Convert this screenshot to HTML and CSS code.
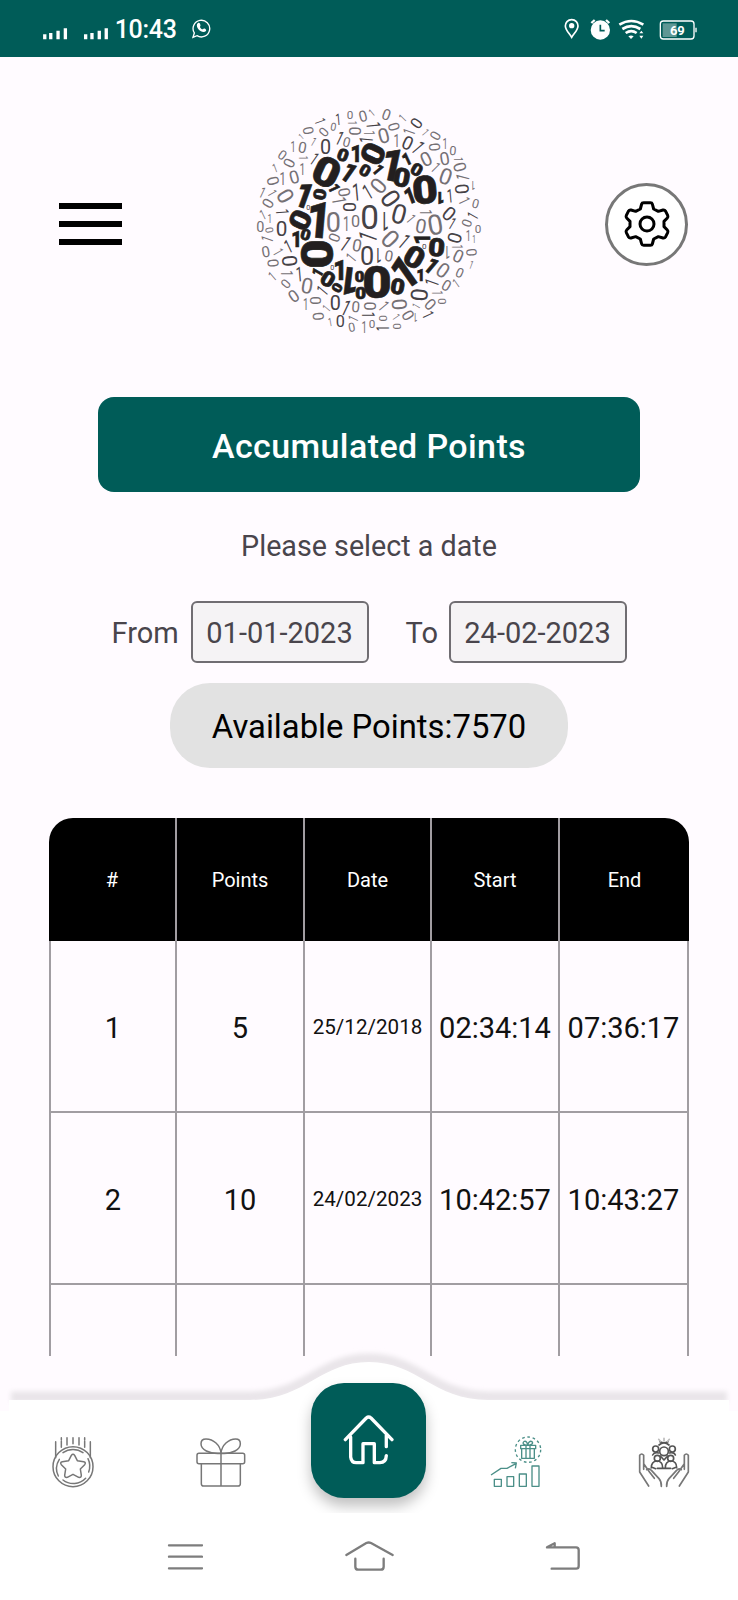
FILE: index.html
```html
<!DOCTYPE html>
<html lang="en">
<head>
<meta charset="utf-8">
<title>Accumulated Points</title>
<link rel="stylesheet" href="styles.css">
</head>
<body>
<div class="screen">
  <div class="statusbar">
    <svg class="signal" viewBox="126 80 200 40"><path d="M134 102v15M152 98v19M174 91v26M196 84v33M257 102v15M276 98v19M298 91v26M319 84v33"/></svg>
    <span class="clock">10:43</span>
    <svg class="chat" viewBox="574 54 60 64"><path d="M580 112l4-13a25 25 0 1 1 8 8z" fill="none" stroke="#fff" stroke-width="4"/><path d="M592 73c5-7 8-5 10 1 2 5-3 5 0 9 4 5 6 6 9 4 4-4 11 3 8 6-9 9-31-5-27-20z" fill="#fff"/></svg>
    <svg class="sysicons" viewBox="580 50 410 72">
      <path d="M609 58c-12 0-19 9-19 19 0 12 12 22 19 34 7-12 19-22 19-34 0-10-7-19-19-19z" fill="none" stroke="#fff" stroke-width="5"/><circle cx="609" cy="76" r="8" fill="#fff"/>
      <circle cx="695" cy="89" r="29" fill="#fff"/><path d="M668 68l10-9M722 68l-10-9" stroke="#fff" stroke-width="7"/><path d="M695 73v18h13" stroke="#005c58" stroke-width="5" fill="none"/>
      <path d="M752 73q36-22 72 0M761 86q27-17 54 0M771 98q17-11 33 0" fill="none" stroke="#fff" stroke-width="8"/><path d="M779 108q8-5 16 0l-8 8zM812 99l6-8 6 8zM812 106l6 9 6-9z" fill="#fff"/>
      <rect x="882" y="69" width="42" height="41" fill="#5f9794"/><rect x="875" y="62" width="101" height="54" rx="9" fill="none" stroke="#fff" stroke-width="4"/><path d="M982 82v14" stroke="#fff" stroke-width="4"/><text x="926" y="105" text-anchor="middle" class="battery">69</text>
    </svg>
  </div>

  <header class="header">
    <div class="burger"><i></i><i></i><i></i></div>
    <svg class="logo" id="logo" viewBox="0 0 750 735"></svg>
    <div class="gear">
      <svg viewBox="96 88 150 150"><path d="M161 99h20q5 0 6 4l4 15 14 7 14-4q5-1 8 4l6 12q2 5-1 8l-10 10v16l10 10q3 3 1 8l-6 12q-3 5-8 4l-14-4-14 7-4 15q-1 4-6 4h-20q-5 0-6-4l-4-15-14-7-14 4q-5 1-8-4l-6-12q-2-5 1-8l10-10v-16l-10-10q-3-3-1-8l6-12q3-5 8-4l14 4 14-7 4-15q1-4 6-4z"/><circle cx="171" cy="163" r="21"/></svg>
    </div>
  </header>

  <main class="content">
    <h1 class="title">Accumulated Points</h1>
    <p class="hint">Please select a date</p>
    <div class="range">
      <span class="from">From</span><span class="date">01-01-2023</span>
      <span class="to">To</span><span class="date">24-02-2023</span>
    </div>
    <div class="available">Available Points:7570</div>
    <div class="table">
      <div class="row head"><span>#</span><span>Points</span><span>Date</span><span>Start</span><span>End</span></div>
      <div class="row"><span>1</span><span>5</span><span class="small">25/12/2018</span><span>02:34:14</span><span>07:36:17</span></div>
      <div class="row"><span>2</span><span>10</span><span class="small">24/02/2023</span><span>10:42:57</span><span>10:43:27</span></div>
      <div class="row"><span></span><span></span><span></span><span></span><span></span></div>
    </div>
  </main>

  <nav class="tabs">
    <svg class="wave" viewBox="0 0 738 180">
      <defs><filter id="soft" x="-5%" y="-50%" width="110%" height="200%"><feGaussianBlur stdDeviation="2.4"/></filter></defs>
      <path d="M11 57H250C305 57 320 19 369 19S433 57 488 57H727" fill="none" stroke="#e9e5e9" stroke-width="11" filter="url(#soft)"/>
      <path d="M0 180V71H9V60H250C305 60 320 22 369 22S433 60 488 60H729V71H738V180z" fill="#fff"/>
    </svg>
    <svg class="icon" viewBox="142 287 156 156">
      <circle cx="220" cy="379" r="60"/><path d="M176 407a51 51 0 0 1 3-50M190 337a51 51 0 0 1 60 0M265 355a51 51 0 0 1 2 40M258 414a51 51 0 0 1-68 5"/>
      <path d="M215 345q5-7 10 0l8 16 19 3q8 2 3 9l-13 13 3 19q0 8-8 6l-17-9-17 9q-8 2-8-6l3-19-13-13q-5-7 3-9l19-3z"/>
      <path d="M168 304v48M272 304v48M185 292v7M185 303v18M202 292v22M220 292v18M238 292v22M255 292v7M255 303v18"/>
    </svg>
    <svg class="icon" viewBox="586 287 156 156"><rect x="592" y="339" width="143" height="31" rx="6"/><path d="M605 370v60q0 7 7 7h103q7 0 7-7v-60M664 339v98M664 339c-37 3-60-12-60-29 0-9 5-14 15-14 22 0 43 18 45 43 2-25 23-43 44-43 10 0 14 5 14 14 0 17-23 32-58 29z"/></svg>
    <div class="home"><svg viewBox="1030 218 154 160"><path d="M1037 298l63-65q7-6 14 0l63 65M1053 290v60q2 17 17 17h20v-57h34v57h17q18 0 19-21M1160 285v34"/></svg></div>
    <svg class="icon chart" viewBox="363 287 156 156">
      <path d="M376 417h21v21h-21zM414 409h20v29h-20zM451 401h21v37h-21zM489 377h21v61h-21zM366 404l30-20h18l27-14M427 367l15 1-3 16"/><circle cx="477" cy="328" r="38" stroke-dasharray="8 8"/><path d="M455 315h45v10h-45zM458 325h38v29h-38zM471 315v39M483 315v39M476 315c-12-1-18-6-10-12 6-2 9 5 10 12 1-8 7-15 13-11 5 5-1 10-13 11"/>
    </svg>
    <svg class="icon hands" viewBox="806 287 156 156">
      <path d="M811 395v-50q6-8 12 0v42M811 395l27 42M823 370l18 26 14 18M832 388q8-6 15 3l22 24q8 9 7 23M957 395v-50q-6-8-12 0v42M957 395l-27 42M945 370l-18 26-14 18M936 388q-8-6-15 3l-22 24q-8 9-7 23"/>
      <g class="people"><circle cx="884" cy="333" r="13"/><circle cx="859" cy="326" r="9"/><circle cx="909" cy="326" r="9"/><circle cx="864" cy="354" r="9"/><circle cx="904" cy="354" r="9"/><path d="M850 344q5-10 18-6M900 338q14-4 18 6M846 382q0-18 16-20 18 0 18 20M888 382q0-18 16-20 18 0 18 20M846 380l13 5M922 380l-13 5M864 384h40M869 314q15-13 30 0M872 304q12 7 24 0M873 347l11 12 11-12"/><path class="faint" d="M884 294v8M868 297l5 6M900 297l-5 6"/></g>
    </svg>
  </nav>

  <footer class="sysnav">
    <svg viewBox="500 600 110 95"><path d="M506 616h99M506 650h99M506 685h99"/></svg>
    <svg class="syshome" viewBox="1030 600 156 95"><path d="M1040 645l60-36q7-3 14 0l65 36M1067 656v24q0 9 9 9h67q9 0 9-9v-24"/></svg>
    <svg viewBox="525 600 110 95"><path d="M536 622h85q8 0 8 8v48q0 8-8 8h-73M534 622l23-12v12"/></svg>
  </footer>
</div>
<script src="logo.js"></script>
</body>
</html>
```
FILE: styles.css
```css
* { box-sizing: border-box; }
body { margin: 0; font-family: Roboto, sans-serif; background: #fffbff; }
.screen { width: 738px; height: 1600px; overflow: hidden; display: flex; flex-direction: column; background: #fffbff; }
.statusbar { height: 57px; flex: none; background: #005c58; color: #fff; display: flex; align-items: flex-start; }
.signal { width: 66.7px; height: 13.3px; margin: 26.7px 0 0 42px; fill: none; stroke: #fff; stroke-width: 10; }
.clock { font-size: 25px; font-weight: 500; line-height: 30px; margin: 15px 0 0 6px; width: 62px; letter-spacing: -.3px; }
.chat { width: 20px; height: 21.3px; margin: 18px 0 0 14px; }
.sysicons { width: 136.7px; height: 24px; margin: 16.7px 0 0 351px; }
.battery { font: 700 39px Roboto, sans-serif; fill: #fff; }

.header { height: 340px; flex: none; display: flex; align-items: flex-start; padding-left: 59px; }
.burger { width: 63px; margin-top: 146px; display: grid; gap: 12px; }
.burger i { height: 6px; background: #000; }
.logo { width: 250px; height: 245px; margin: 41px 0 0 123px; }
.logo text { text-anchor: middle; font-family: Roboto, sans-serif; fill: #757075; }
.logo .dark { fill: #454146; }
.logo .bold { font-weight: 900; fill: #231f20; stroke: #231f20; stroke-width: 2; }
.gear { width: 83px; height: 83px; margin: 125.5px 0 0 110px; border: 3px solid #777; border-radius: 50%; background: #fff; display: grid; place-items: center; }
.gear svg { width: 50px; height: 50px; fill: none; stroke: #000; stroke-width: 9; stroke-linejoin: round; }

.content { height: 959px; flex: none; overflow: hidden; display: flex; flex-direction: column; align-items: center; }
.title { margin: 0; width: 542px; height: 95px; flex: none; border-radius: 16px; background: #005c58; color: #fff; font-size: 34px; font-weight: 500; line-height: 98px; text-align: center; letter-spacing: .4px; }
.hint { margin: 37px 0 0; font-size: 28.7px; line-height: 34px; color: #49454c; }
.range { margin-top: 37px; height: 63px; flex: none; width: 515px; display: flex; align-items: center; color: #49454c; font-size: 29px; }
.from, .to { padding-top: 2px; }
.from { width: 79px; }
.to { width: 43px; margin-left: 37px; }
.date { width: 178px; height: 62px; border: 2.5px solid #706d72; border-radius: 6px; background: #f5f3f5; text-align: center; line-height: 60px; }
.available { margin-top: 20px; width: 398px; height: 85px; flex: none; border-radius: 40px; background: #e2e2e2; color: #000; font-size: 32.8px; line-height: 89px; text-align: center; }
.table { margin-top: 50px; width: 640px; flex: none; }
.row { display: grid; grid-template-columns: 128px 128px 127px 128px 129px; height: 172px; }
.row span { display: grid; place-items: center; font-size: 29px; color: #111; border-right: 2px solid #a19da2; border-bottom: 2px solid #a19da2; padding-top: 3px; }
.row span:first-child { border-left: 2px solid #a19da2; }
.row .small { font-size: 20.6px; padding-top: 2px; }
.head { height: 123px; background: #000; border-radius: 24px 24px 0 0; overflow: hidden; }
.row.head span { font-size: 20px; color: #fff; border-bottom: 0; padding: 1px 0 0; }
.head span:first-child { border-left: 0; }
.head span:last-child { border-right: 0; }

.tabs { height: 157px; flex: none; position: relative; display: grid; grid-template-columns: repeat(5, 1fr); justify-items: center; padding-top: 26.5px; }
.tabs > * { position: relative; }
.tabs .wave { position: absolute; left: 0; top: -16px; width: 738px; height: 180px; }
.icon { width: 52px; height: 52px; margin: 53px 1px 0 0; fill: none; stroke: #777; stroke-width: 4.5; stroke-linecap: round; stroke-linejoin: round; }
.chart { stroke: #4b8f88; stroke-width: 4; stroke-linecap: butt; margin-right: 2px; }
.hands { stroke-width: 5; stroke: #777; }
.people { stroke: #555; stroke-width: 5; }
.faint { stroke: #bbb; }
.home { width: 115px; height: 115px; border-radius: 33px; background: #005c58; display: grid; place-items: center; box-shadow: 0 8px 14px rgba(0,0,0,.25); }
.home svg { width: 51.3px; height: 53.3px; fill: none; stroke: #fff; stroke-width: 10; stroke-linecap: round; stroke-linejoin: round; }
.sysnav { position: relative; height: 87px; flex: none; background: #fff; display: flex; align-items: flex-start; padding: 27px 0 0 166.5px; }
.sysnav svg { width: 36.7px; height: 31.7px; fill: none; stroke: #7d7d7d; stroke-width: 7; stroke-linecap: round; stroke-linejoin: round; }
.sysnav .syshome { width: 52px; margin: 0 148.5px 0 140px; }
```
FILE: logo.js
```js
// Each entry: digit, centre x, centre y, digit height, rotation in degrees.
const bold = `0 245 222 90 25;0 294 171 38 20;1 334 167 52 0;0 384 167 70 -65;1 442 200 100 12;1 485 183 38 -25;0 515 215 38 30;0 470 238 58 10;0 540 275 86 -5;1 495 293 50 -20;0 360 217 36 30;1 400 215 36 50;1 312 223 60 35;1 268 270 34 65;0 224 289 38 -80;1 178 292 78 20;0 166 366 64 -65;1 222 365 112 5;0 182 410 34 15;1 155 425 48 0;0 214 468 98 90;1 217 523 34 -60;0 249 543 46 30;1 285 515 62 0;0 276 569 30 -60;1 313 550 86 187;0 344 536 32 0;0 347 586 36 0;0 396 554 98 0;0 458 565 48 10;1 478 522 100 -35;0 508 477 66 30;1 527 530 38 0;1 530 423 50 -90;0 575 448 56 5;1 560 503 50 40;1 586 298 36 180`;
const dark = `1 615 293 42 -5;1 334 282 54 -5;1 368 281 48 -30;0 437 301 58 55;0 312 327 40 90;0 374 358 74 0;1 419 368 56 180;0 462 348 60 15;0 612 347 44 40;1 622 376 38 30;1 302 437 50 35;1 368 416 58 -70;1 478 430 50 40;0 366 474 56 0;1 400 471 46 180;1 280 64 36 -5;0 514 76 36 -55;1 226 70 34 70;1 284 120 44 25;1 386 82 44 85;1 363 125 42 -85;0 488 135 42 25;1 520 148 48 50;1 208 182 40 35;0 242 148 44 0;0 651 273 42 85;1 683 353 36 -60;0 629 420 42 -75;1 560 553 44 -70;0 523 590 52 95;1 549 650 36 65;1 413 691 40 -90;1 370 651 42 90;1 303 629 50 25;0 271 615 44 0;0 286 671 36 0;1 232 578 40 -50;1 163 528 46 -5;0 134 489 46 85;1 130 445 42 -25;0 110 392 46 0;1 112 342 40 85;0 190 328 16 0;0 262 508 16 0;0 538 443 18 0`;
const light = `0 298 283 36 80;0 400 263 50 -50;1 283 308 44 80;0 265 373 60 0;1 304 377 44 0;0 332 370 36 0;1 498 362 34 50;1 543 343 38 90;0 528 384 44 10;0 571 380 62 -10;0 268 419 34 -70;0 336 442 38 10;0 436 423 56 45;1 318 478 36 -50;0 432 474 34 10;0 315 50 26 0;0 354 54 34 -15;1 380 44 24 -40;0 424 50 34 20;1 473 60 28 -45;0 190 98 32 80;0 236 102 30 -50;0 265 86 24 10;1 168 116 20 -40;1 206 131 28 30;0 305 132 30 15;0 328 99 36 90;1 321 75 28 90;1 373 105 34 90;0 416 113 46 -15;0 447 86 34 75;1 455 126 42 0;1 492 101 38 -70;1 541 103 26 50;0 571 113 32 -60;0 569 147 34 85;1 600 138 34 0;0 624 158 28 5;0 599 182 40 -10;0 543 183 44 -25;1 572 208 36 45;0 602 235 50 20;0 645 207 38 75;1 640 184 30 90;1 653 238 42 -75;1 684 264 30 180;1 658 308 36 65;0 692 317 28 15;0 665 375 30 -70;0 699 391 26 0;1 670 414 34 0;1 687 423 24 0;1 637 447 32 90;1 607 463 40 180;0 640 474 40 25;0 679 463 32 85;1 679 500 26 20;0 644 524 30 25;0 594 517 46 35;1 633 556 30 -35;0 604 562 34 30;1 577 585 32 90;0 591 610 26 90;0 556 619 36 45;1 513 624 26 -60;1 511 659 28 180;0 489 652 36 60;0 463 619 46 85;1 454 657 26 55;0 457 685 26 90;1 416 624 38 50;0 416 661 26 90;0 381 677 26 0;1 358 687 36 0;0 320 688 28 -10;0 374 624 36 90;0 332 626 34 5;1 324 662 32 -65;1 256 672 26 -10;0 220 655 34 85;1 244 631 28 -50;0 211 608 34 90;1 182 620 36 0;0 146 594 38 -35;0 186 563 48 10;0 122 557 30 -50;1 125 526 38 90;1 82 535 32 -40;0 84 495 34 85;0 62 461 34 -10;1 100 462 34 60;1 66 423 38 -70;0 73 396 24 80;0 46 388 32 0;1 74 360 30 0;1 53 350 32 -25;0 69 316 34 -60;1 52 283 34 25;1 82 285 30 60;0 121 294 50 60;0 84 249 36 75;1 113 242 42 0;0 148 237 40 -15;1 90 210 28 -20;1 172 213 38 0;0 132 195 34 -65;0 112 171 30 35;1 144 146 34 0;0 172 148 34 10;1 175 180 28 90`;

const logo = document.getElementById("logo");
for (const [name, list] of [["light", light], ["dark", dark], ["bold", bold]]) {
  for (const entry of list.split(";")) {
    const [digit, x, y, height, angle] = entry.split(" ");
    const node = document.createElementNS("http://www.w3.org/2000/svg", "text");
    // Thin ones are condensed; heavy zeros are slightly extended.
    const stretch = digit === "1" ? (name === "bold" ? 0.85 : 0.6) : (name === "bold" ? 1.15 : 1);
    node.textContent = digit;
    node.setAttribute("class", name);
    node.setAttribute("font-size", height / 0.74);
    node.setAttribute("transform", `translate(${x} ${y}) rotate(${angle}) scale(${stretch} 1)`);
    node.setAttribute("y", height * 0.48);
    logo.appendChild(node);
  }
}
```
